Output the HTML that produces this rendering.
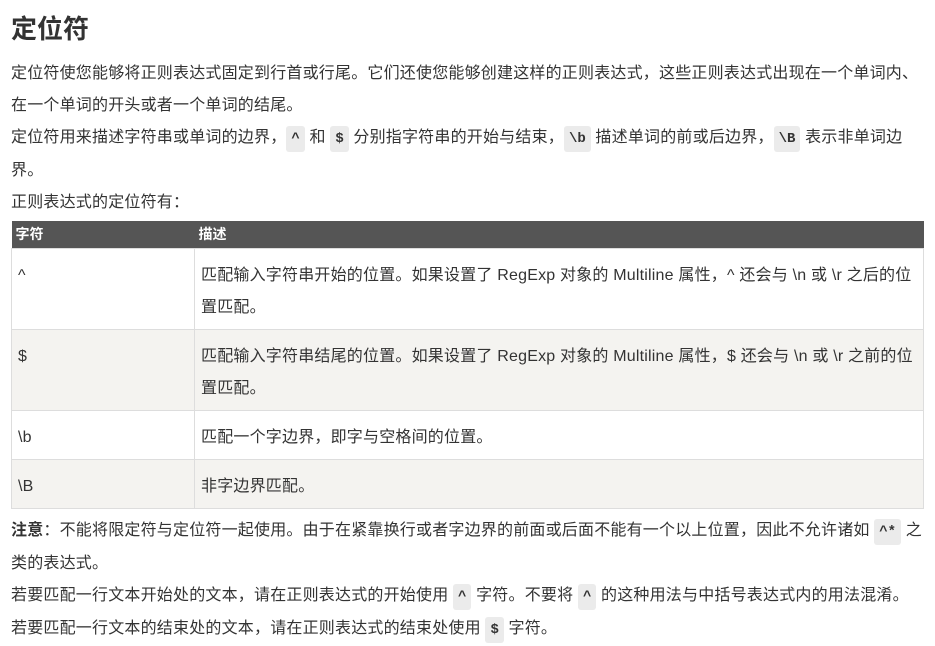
<!DOCTYPE html>
<html><head><meta charset="utf-8"><style>
body{margin:0;background:#fff;font-family:"Liberation Sans","Noto Sans CJK SC",sans-serif;color:#333;font-size:16px;letter-spacing:0.2px}
.w{padding:0 11px 0 11px;width:913px;}
h1{font-size:26px;font-weight:bold;margin:0;padding-top:10px;line-height:38px;height:48px;color:#333;letter-spacing:0}
p{margin:0;line-height:32px;}
code{font-family:"Liberation Mono",monospace;font-weight:bold;background:#ebebeb;border-radius:3px;padding:5px 5px;font-size:14px;color:#333;letter-spacing:0}
table{border-collapse:collapse;width:913px;margin:2px 0 0 0;}
th{background:#555;color:#fff;text-align:left;font-size:14px;height:27px;padding:0 4px;line-height:27px;letter-spacing:0}
td{border:1px solid #ddd;padding:11px 6px 5px;line-height:32px;vertical-align:top;}
tr.g td{background:#f4f3f0}
td:first-child{width:170px}
.n{margin-top:6px}
</style></head><body><div class="w">
<h1>定位符</h1>
<p>定位符使您能够将正则表达式固定到行首或行尾。它们还使您能够创建这样的正则表达式，这些正则表达式出现在一个单词内、在一个单词的开头或者一个单词的结尾。</p>
<p>定位符用来描述字符串或单词的边界，<code>^</code> 和 <code>$</code> 分别指字符串的开始与结束，<code>\b</code> 描述单词的前或后边界，<code>\B</code> 表示非单词边界。</p>
<p>正则表达式的定位符有：</p>
<table>
<tr><th>字符</th><th>描述</th></tr>
<tr><td>^</td><td>匹配输入字符串开始的位置。如果设置了 RegExp 对象的 Multiline 属性，^ 还会与 \n 或 \r 之后的位置匹配。</td></tr>
<tr class="g"><td>$</td><td>匹配输入字符串结尾的位置。如果设置了 RegExp 对象的 Multiline 属性，$ 还会与 \n 或 \r 之前的位置匹配。</td></tr>
<tr><td>\b</td><td>匹配一个字边界，即字与空格间的位置。</td></tr>
<tr class="g"><td>\B</td><td>非字边界匹配。</td></tr>
</table>
<p class="n"><b>注意</b>：不能将限定符与定位符一起使用。由于在紧靠换行或者字边界的前面或后面不能有一个以上位置，因此不允许诸如 <code>^*</code> 之类的表达式。</p>
<p>若要匹配一行文本开始处的文本，请在正则表达式的开始使用 <code>^</code> 字符。不要将 <code>^</code> 的这种用法与中括号表达式内的用法混淆。</p>
<p>若要匹配一行文本的结束处的文本，请在正则表达式的结束处使用 <code>$</code> 字符。</p>
</div></body></html>
